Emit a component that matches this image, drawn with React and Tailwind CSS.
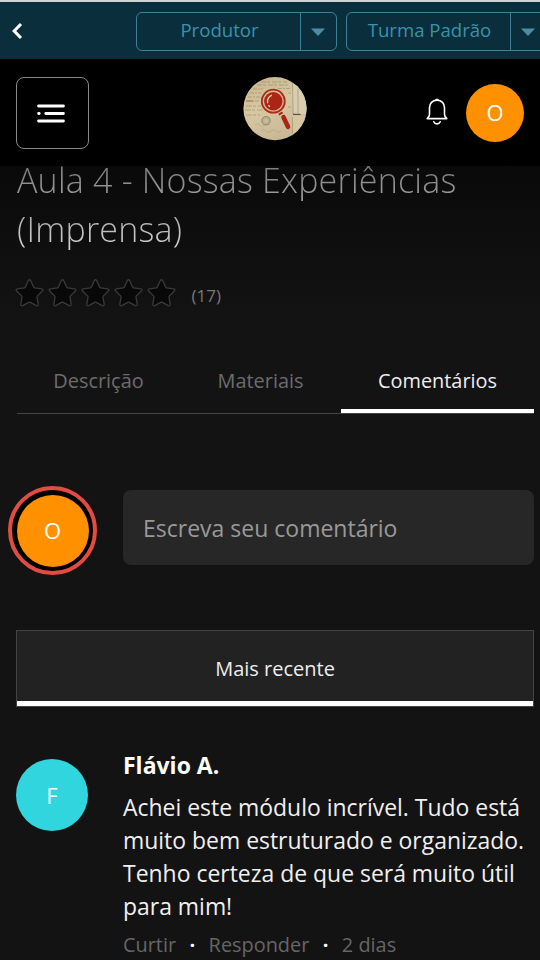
const TABS = [
  { id: 'desc', label: 'Descrição', width: 'w-[163px]' },
  { id: 'mat', label: 'Materiais', width: 'w-[161px]' },
  { id: 'com', label: 'Comentários', width: 'w-[193px]', active: true },
];

const COMMENT = {
  initial: 'F',
  author: 'Flávio A.',
  lines: [
    'Achei este módulo incrível. Tudo está',
    'muito bem estruturado e organizado.',
    'Tenho certeza de que será muito útil',
    'para mim!',
  ],
  time: '2 dias',
};

function SelectBox({ label, className }) {
  return (
    <div className={`flex h-[39px] shrink-0 rounded-[6px] border border-[#3f8097] text-[18.6px] leading-[34px] text-[#3b92ab] ${className}`}>
      <span className="flex-1 pl-[2px] text-center whitespace-nowrap">{label}</span>
      <span className="flex w-[36px] items-center justify-center border-l border-[#3f8097] pr-[2px]">
        <svg width="14" height="8" viewBox="0 0 14 8" fill="#4c8da3">
          <path d="M0 0.5h14L7 8z" />
        </svg>
      </span>
    </div>
  );
}

function Star() {
  return (
    <svg width="29" height="29" viewBox="0 0 29 29" fill="#080808" stroke="#3a3a3a" strokeWidth="1.3" strokeLinejoin="round">
      <path d="M13.3 1.7Q14.5 -0.2 15.7 1.7L18.7 8.1Q19 8.7 19.8 8.9L26.6 9.8Q28.8 10.3 27.3 12L22.4 16.9Q21.9 17.5 22 18.3L23.2 25.1Q23.3 27.3 21.3 26.6L15.3 23.4Q14.5 23 13.7 23.4L7.7 26.6Q5.7 27.3 5.8 25.1L7 18.3Q7.1 17.5 6.6 16.9L1.7 12Q0.2 10.3 2.4 9.8L9.2 8.9Q10 8.7 10.3 8.1Z" />
    </svg>
  );
}

function Logo() {
  return (
    <svg width="64" height="64" viewBox="0 0 64 64">
      <defs>
        <clipPath id="disc"><circle cx="32" cy="31.6" r="31.6" /></clipPath>
        <linearGradient id="paper" x1="0" y1="0" x2="0.4" y2="1">
          <stop offset="0" stopColor="#c3b28c" />
          <stop offset="0.5" stopColor="#d8c8a2" />
          <stop offset="1" stopColor="#c9b997" />
        </linearGradient>
      </defs>
      <g clipPath="url(#disc)">
        <rect width="64" height="64" fill="url(#paper)" />
        <path d="M50 0H64V37H51z" fill="#d8cdb0" />
        <path d="M49.5 39H64V64H49z" fill="#d5c6a0" />
        <path d="M49.5 6L50 37M49.5 40v24M55 12v24" stroke="#a39675" strokeWidth="0.7" fill="none" />
        <path d="M50 37.3h7.5" stroke="#5d5240" strokeWidth="1.2" />
        {/* handwriting */}
        <g stroke="#8f8163" strokeWidth="0.7" fill="none" opacity="0.75">
          <path d="M18 5h26M14 8h33" strokeDasharray="5 1 3 2" />
          <path d="M10 12h10M35 11.5h12M7 16h11M5 20h12M4 24h13M45 16h3" strokeDasharray="4 1 2 1" />
          <path d="M3 29h15M2 33h18M3 38h14M45 30h3" strokeDasharray="6 1 3 2" />
          <path d="M12 48q3-3 5 0t5 0 5 0M18 54q3-3 5 0t5 0 5 0 5 0" opacity="0.5" />
        </g>
        <path d="M3 24h7" stroke="#a85d48" strokeWidth="0.8" />
        <circle cx="23" cy="43.7" r="4.2" fill="#bcb092" stroke="#8f866d" strokeWidth="1" />
        <circle cx="23" cy="43.7" r="1.8" fill="#cbbf9f" />
        <circle cx="30.3" cy="24.2" r="11.5" fill="#d9b993" stroke="#a92b1b" strokeWidth="1.8" />
        <circle cx="30.3" cy="24.2" r="9.2" fill="#ab2415" />
        <path d="M24.6 25.7q-.7-5 3.8-7.4M25.8 28.5l.7.9" stroke="#e4c39d" strokeWidth="1.5" strokeLinecap="round" fill="none" />
        <path d="M35.8 37.6l3.8-2.2" stroke="#ab2415" strokeWidth="2" />
        <path d="M40.5 40.2L45 49.8" stroke="#ab2415" strokeWidth="4.6" strokeLinecap="round" />
      </g>
    </svg>
  );
}

function MenuIcon() {
  return (
    <svg width="28" height="19" viewBox="0 0 28 19" stroke="#fff" strokeWidth="2.9" strokeLinecap="round">
      <path d="M1.6 2h24.8M1.6 9.5h.6M8.8 9.5h17.6M1.6 17h24.8" />
    </svg>
  );
}

function BellIcon() {
  return (
    <svg width="22" height="28" viewBox="0 0 22 28" fill="none" stroke="#fff" strokeWidth="1.6" strokeLinecap="round" strokeLinejoin="round">
      <path d="M11 2.3C6.3 2.3 3.5 5.3 3.5 9.8V16.5Q3.5 18.3 1.2 20.6H20.8Q18.5 18.3 18.5 16.5V9.8C18.5 5.3 15.7 2.3 11 2.3Z" />
      <path d="M10.2 1.7h1.6" strokeWidth="1.8" />
      <path d="M7.8 23.8Q8.7 25.9 11 25.9T14.2 23.8" />
    </svg>
  );
}

export default function App() {
  return (
    <div className="h-[960px] w-[540px] overflow-hidden bg-[#141314] font-['Open_Sans',sans-serif]">
      {/* Producer bar */}
      <div className="flex h-[59px] border-t-2 border-[#ccd3d5] bg-[#0a2e3b] pt-[10px]">
        <svg className="mt-[10px] ml-[11px] shrink-0" width="12" height="18" viewBox="0 0 12 18" fill="none" stroke="#fff" strokeWidth="3.1">
          <path d="M10 2L3.2 9l6.8 7" />
        </svg>
        <SelectBox label="Produtor" className="ml-[113px] w-[201px]" />
        <SelectBox label="Turma Padrão" className="ml-[9px] w-[201px]" />
      </div>

      {/* App header */}
      <header className="relative z-10 flex h-[107px] bg-black">
        <button className="mt-[18px] ml-[16px] flex h-[72px] w-[73px] items-center justify-center rounded-[8px] border border-[#888] pr-[3px]">
          <MenuIcon />
        </button>
        <div className="mt-[18px] ml-[154px]">
          <Logo />
        </div>
        <div className="mt-[39px] ml-[119px]">
          <BellIcon />
        </div>
        <div className="mt-[25px] ml-[18px] flex size-[58px] items-center justify-center rounded-full bg-[#ff9100] pb-[1px] text-[22px] text-white">
          O
        </div>
      </header>

      <main>
        <div className="-mt-[10px] h-[164px] bg-linear-to-b from-[#090909] to-[#141314] pl-[17px]">
          <h1 className="text-[34px] leading-[49px] font-light tracking-[0.2px] whitespace-nowrap">
            <span className="block bg-linear-to-b from-[#7f7f7f] from-30% to-[#a3a3a3] to-90% bg-clip-text text-transparent">Aula 4 - Nossas Experiências</span>
            <span className="block bg-linear-to-b from-[#b0b0b0] from-30% to-[#d4d4d4] to-90% bg-clip-text text-transparent">(Imprensa)</span>
          </h1>
          <div className="mt-[25px] -ml-[2.5px] flex gap-[4px]">
            {[0, 1, 2, 3, 4].map((n) => <Star key={n} />)}
            <span className="mt-[5px] ml-[12px] text-[17px] leading-[23px] text-[#777]">(17)</span>
          </div>
        </div>

        {/* Tabs */}
        <nav className="mt-[44px] ml-[17px] flex h-[50px] w-[517px] border-b border-[#444] text-[19.9px] leading-[34px]">
          {TABS.map((t) => (
            <div
              key={t.id}
              className={`${t.width} shrink-0 text-center ${t.active ? 'border-b-4 border-white text-[#eee]' : 'text-[#6c6c6c]'}`}
            >
              {t.label}
            </div>
          ))}
        </nav>

        {/* New comment */}
        <div className="mt-[72px] ml-[8px] flex">
          <div className="flex size-[89px] shrink-0 items-center justify-center rounded-full border-[4.5px] border-[#e24d43] bg-black">
            <div className="flex size-[72px] items-center justify-center rounded-full bg-[#ff9100] text-[22px] text-white">O</div>
          </div>
          <div className="mt-[4px] ml-[26px] flex h-[75px] w-[411px] items-center rounded-[8px] bg-[#272727] pt-[2px] pl-[20px] text-[23px] text-[#999]">
            Escreva seu comentário
          </div>
        </div>

        {/* Sort order */}
        <div className="mt-[55px] ml-[16px] h-[77px] w-[518px] border border-[#444] bg-[#222]">
          <div className="h-[75px] border-b-[5px] border-white text-center text-[20px] leading-[76px] text-[#eee]">
            Mais recente
          </div>
        </div>

        <article className="mt-[45px] ml-[16px] flex">
          <div className="mt-[7px] flex size-[72px] shrink-0 items-center justify-center rounded-full bg-[#31d5dd] text-[22px] text-white">
            {COMMENT.initial}
          </div>
          <div className="ml-[35px] whitespace-nowrap">
            <div className="text-[23px] leading-[26px] font-bold text-white">{COMMENT.author}</div>
            <div className="mt-[13px] text-[22.95px] leading-[33px] text-[#f0f0f0]">
              {COMMENT.lines.map((line) => <div key={line}>{line}</div>)}
            </div>
            <div className="mt-[8px] flex text-[19.9px] leading-[28px] text-[#666]">
              <span>Curtir</span>
              <span className="w-[32.5px] text-center font-bold text-white">·</span>
              <span>Responder</span>
              <span className="w-[32.5px] text-center font-bold text-white">·</span>
              <span>{COMMENT.time}</span>
            </div>
          </div>
        </article>
      </main>
    </div>
  );
}
